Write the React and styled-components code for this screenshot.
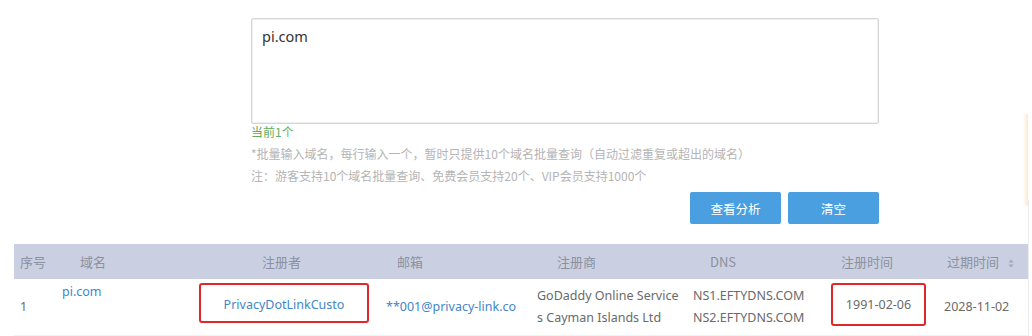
import React from "react";
import styled, { createGlobalStyle } from "styled-components";

const Global = createGlobalStyle`
  html, body { margin: 0; padding: 0; background: #fff; }
  body {
    font-family: "Noto Sans", "Noto Sans CJK SC", sans-serif;
    color: #555;
    width: 1032px;
    height: 336px;
    overflow: hidden;
  }
`;

const Page = styled.div`
  position: relative;
  padding-top: 18px;
`;

const Form = styled.div`
  margin-left: 251px;
  width: 628px;
  display: flex;
  flex-direction: column;
`;

const Input = styled.textarea`
  box-sizing: border-box;
  width: 628px;
  height: 106px;
  resize: none;
  border: 1px solid #d6d6d6;
  box-shadow: inset 0 0 0 1px #efefef;
  border-radius: 2px;
  padding: 7px 10px;
  font-family: "Noto Sans", "Noto Sans CJK SC", sans-serif;
  font-size: 14.5px;
  line-height: 20px;
  color: #333;
  outline: none;
`;

const Hint = styled.div`
  font-family: "Noto Sans CJK SC", sans-serif;
  font-size: 12px;
  line-height: 22px;
  color: ${(p) => (p.$green ? "#5fae5f" : "#b4b4b4")};
  margin-top: ${(p) => p.$mt || 0}px;
  white-space: nowrap;
`;

const Buttons = styled.div`
  display: flex;
  justify-content: flex-end;
  gap: 7px;
  margin-top: 5px;
`;

const Btn = styled.button`
  width: 91px;
  height: 32px;
  border: none;
  border-radius: 2px;
  background: #4a9fe1;
  color: #fff;
  font-family: "Noto Sans CJK SC", sans-serif;
  font-size: 12.5px;
  padding: 0;
`;

const Table = styled.table`
  margin: 20px 0 0 14px;
  width: 1014px;
  border-collapse: collapse;
  table-layout: fixed;
  font-size: 13px;
`;

const Th = styled.th`
  height: 35px;
  padding: 0 0 0 ${(p) => p.$pl}px;
  text-align: left;
  background: #cad0e1;
  color: #8b90a2;
  font-weight: 400;
  font-family: "Noto Sans CJK SC", sans-serif;
  font-size: 13px;
  white-space: nowrap;
`;

const Td = styled.td`
  height: 56px;
  box-sizing: border-box;
  padding: ${(p) => (p.$top ? "2px" : "0")} 0 0 ${(p) => p.$pl || 0}px;
  vertical-align: ${(p) => (p.$top ? "top" : "middle")};
  text-align: left;
  color: ${(p) => (p.$link ? "#4286c8" : "#6a6a6a")};
  font-family: "Noto Sans", "Noto Sans CJK SC", sans-serif;
  font-size: 12.5px;
  line-height: 22px;
  white-space: nowrap;
  overflow: hidden;
  border-bottom: 1px solid #f2f2f2;
`;

const Row = styled.tr``;

const Marked = styled.div`
  box-sizing: border-box;
  margin: 0 0 ${(p) => p.$lift || 0}px ${(p) => p.$ml}px;
  width: ${(p) => p.$w}px;
  height: ${(p) => p.$h}px;
  padding-top: ${(p) => p.$pt || 0}px;
  border: 2px solid #e0282a;
  border-radius: 3px;
  display: flex;
  align-items: center;
  justify-content: center;
  color: ${(p) => (p.$link ? "#4286c8" : "#6a6a6a")};
`;

const SortIcon = styled.svg`
  margin-left: 9px;
  vertical-align: -1px;
`;

const Glow = styled.div`
  position: absolute;
  right: 4px;
  top: 114px;
  width: 5px;
  height: 92px;
  background: linear-gradient(90deg, rgba(255, 236, 210, 0) 0%, rgba(255, 214, 160, 0.55) 100%);
`;

const EdgeLine = styled.div`
  position: absolute;
  right: 3px;
  top: 200px;
  bottom: 0;
  width: 1px;
  background: #ececec;
`;

const cols = [42, 140, 174, 160, 154, 136, 116, 92];

export default function App() {
  return (
    <Page>
      <Global />
      <Form>
        <Input readOnly defaultValue="pi.com" />
        <Hint $green $mt={-3}>当前1个</Hint>
        <Hint>*批量输入域名，每行输入一个，暂时只提供10个域名批量查询（自动过滤重复或超出的域名）</Hint>
        <Hint>注：游客支持10个域名批量查询、免费会员支持20个、VIP会员支持1000个</Hint>
        <Buttons>
          <Btn>查看分析</Btn>
          <Btn>清空</Btn>
        </Buttons>
      </Form>
      <Table>
        <colgroup>
          {cols.map((w, i) => (
            <col key={i} style={{ width: w }} />
          ))}
        </colgroup>
        <thead>
          <tr>
            <Th $pl={6}>序号</Th>
            <Th $pl={24}>域名</Th>
            <Th $pl={66}>注册者</Th>
            <Th $pl={27}>邮箱</Th>
            <Th $pl={27}>注册商</Th>
            <Th $pl={26}>DNS</Th>
            <Th $pl={21}>注册时间</Th>
            <Th $pl={11}>
              过期时间
              <SortIcon width="6" height="9" viewBox="0 0 6 9">
                <path d="M3 0.5 L5.5 3.5 H0.5 Z M3 8.5 L0.5 5.5 H5.5 Z" fill="#a4a8b6" />
              </SortIcon>
            </Th>
          </tr>
        </thead>
        <tbody>
          <Row>
            <Td $pl={6}>1</Td>
            <Td $pl={6} $top $link>pi.com</Td>
            <Td>
              <Marked $ml={3} $w={170} $h={40} $lift={8} $pt={4} $link>PrivacyDotLinkCusto</Marked>
            </Td>
            <Td $pl={16} $link>**001@privacy-link.co</Td>
            <Td $pl={7}>GoDaddy Online Service<br />s Cayman Islands Ltd</Td>
            <Td $pl={9}>NS1.EFTYDNS.COM<br />NS2.EFTYDNS.COM</Td>
            <Td>
              <Marked $ml={11} $w={95} $h={43} $lift={4}>1991-02-06</Marked>
            </Td>
            <Td $pl={8}>2028-11-02</Td>
          </Row>
        </tbody>
      </Table>
      <Glow />
      <EdgeLine />
    </Page>
  );
}
